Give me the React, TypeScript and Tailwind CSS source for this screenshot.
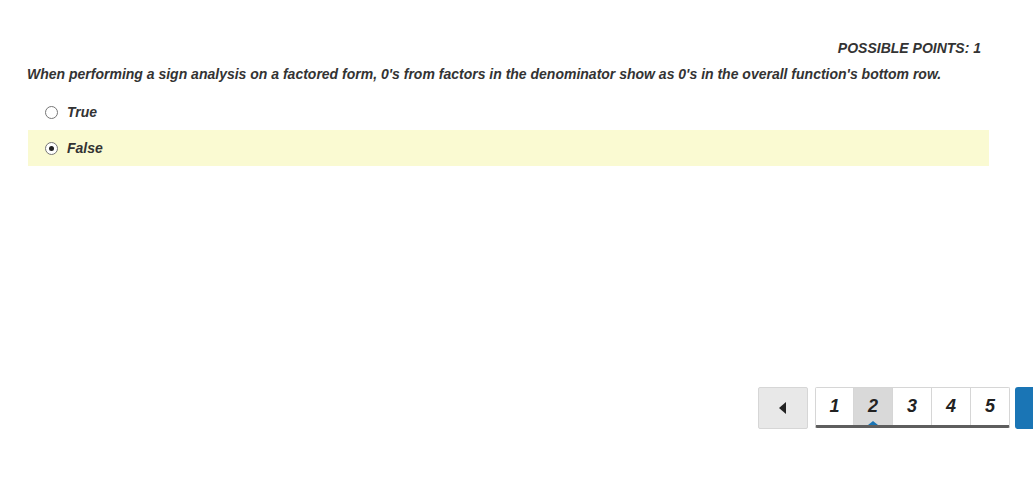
import React from "react"

const pages = [1, 2, 3, 4, 5]

function Radio({ checked }: { checked?: boolean }) {
  return (
    <span className="flex h-[13px] w-[13px] shrink-0 items-center justify-center rounded-full border border-[#767676] bg-white">
      {checked && <span className="h-[5px] w-[5px] rounded-full bg-[#222]" />}
    </span>
  )
}

export default function App() {
  return (
    <div
      className="relative h-[479px] w-[1033px] overflow-hidden bg-white text-[#333] italic font-bold"
      style={{ fontFamily: '"Liberation Sans", Arial, sans-serif' }}
    >
      <div className="w-[989px] pl-[27px] pt-[40px]">
        <div className="pr-[8px] text-right text-[14px] leading-[16px]">POSSIBLE POINTS: 1</div>
        <div className="mt-[10px] text-[14px] leading-[16px]">
          When performing a sign analysis on a factored form, 0's from factors in the denominator show as 0's in the overall function's bottom row.
        </div>
        <div className="mt-[12px] flex flex-col">
          <div className="flex h-[36px] items-center gap-[9px] pl-[18px] text-[14px]">
            <Radio />
            <span>True</span>
          </div>
          <div className="ml-[1px] flex h-[36px] items-center gap-[9px] bg-[#fafad2] pl-[17px] text-[14px]">
            <Radio checked />
            <span>False</span>
          </div>
        </div>
      </div>

      <div className="mt-[221px] flex items-start pl-[758px]">
        <button className="flex h-[42px] w-[50px] shrink-0 items-center justify-center rounded-[2px] border border-[#d6d6d6] bg-[#e8e8e8]">
          <svg width="8" height="12" viewBox="0 0 8 12">
            <path d="M7 0 L0 6 L7 12 Z" fill="#222" />
          </svg>
        </button>
        <div className="ml-[7px] flex h-[41px] shrink-0 overflow-hidden rounded-[2px] border border-b-[3px] border-[#d6d6d6] border-b-[#5e5e5e] bg-white">
          {pages.map((p, i) => (
            <div
              key={p}
              className={
                p === 2
                  ? "relative flex w-[39px] shrink-0 items-center justify-center border-l border-[#d6d6d6] bg-[#d9d9d9] text-[18px] text-[#222]"
                  : i === 0
                    ? "relative flex w-[37px] shrink-0 items-center justify-center bg-white text-[18px] text-[#222]"
                    : "relative flex w-[39px] shrink-0 items-center justify-center border-l border-[#d6d6d6] bg-white text-[18px] text-[#222]"
              }
            >
              {p}
              {p === 2 && (
                <>
                  <span className="absolute bottom-[-3px] left-0 right-0 h-[3px] bg-[#1a75b5]" />
                  <span className="absolute bottom-0 left-1/2 h-0 w-0 -translate-x-1/2 border-x-[5px] border-b-[4px] border-x-transparent border-b-[#1a75b5]" />
                </>
              )}
            </div>
          ))}
        </div>
        <button className="ml-[5px] h-[42px] w-[40px] shrink-0 rounded-l-[3px] bg-[#1a75b5]" />
      </div>
    </div>
  )
}
